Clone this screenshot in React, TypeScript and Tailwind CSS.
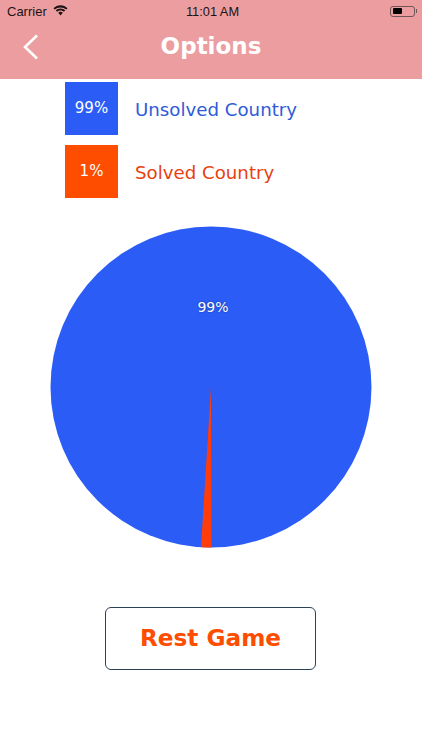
const dejavu = "font-['DejaVu_Sans',sans-serif]";

function WifiIcon() {
    return (
        <svg width="15" height="11" viewBox="0 0 15 11" fill="#1c1416" className="-mt-[3px]">
            <path d="M7.5 2.4c2.2 0 4.2.9 5.7 2.2l1.3-1.4C12.6 1.4 10.2.3 7.5.3S2.4 1.4.5 3.2l1.3 1.4c1.5-1.3 3.5-2.2 5.7-2.2z" />
            <path d="M7.5 5.5c1.3 0 2.5.5 3.4 1.3l1.3-1.4C10.9 4.3 9.3 3.6 7.5 3.6s-3.4.7-4.7 1.8l1.3 1.4c.9-.8 2.1-1.3 3.4-1.3z" />
            <path d="M7.5 6.8c-.9 0-1.7.3-2.3.9l2.3 2.9 2.3-2.9c-.6-.6-1.4-.9-2.3-.9z" />
        </svg>
    );
}

function BatteryIcon() {
    return (
        <div className="-mt-[1px] flex items-center">
            <div className="flex h-[11px] w-[25px] items-center rounded-[3px] border border-[#6f5557] p-[1.5px]">
                <div className="h-full w-[9px] rounded-[1px] bg-black" />
            </div>
            <div className="ml-[1px] h-[4px] w-[1px] bg-[#6f5557]" />
        </div>
    );
}

function BackIcon() {
    return (
        <svg className="absolute left-[22px] top-[12px]" width="17" height="26" viewBox="0 0 17 26" fill="none" stroke="white" strokeWidth="2.6">
            <path d="M15 1.5 L3 13 L15 24.5" />
        </svg>
    );
}

function LegendRow({ color, textColor, value, label }: { color: string; textColor: string; value: string; label: string }) {
    return (
        <div className="flex items-center">
            <div className={`flex h-[53px] w-[53px] items-center justify-center text-[15px] text-white ${color}`}>{value}</div>
            <span className={`ml-[17px] mt-[3px] text-[18.2px] ${textColor}`}>{label}</span>
        </div>
    );
}

export default function App() {
    return (
        <div className={`flex h-[750px] w-[422px] flex-col overflow-hidden bg-white ${dejavu}`}>
            <header className="h-[79px] shrink-0 bg-[#ec9d9f]">
                <div className="flex h-[22px] items-center justify-between pl-[7px] pr-[5px] pt-[1px] font-['Liberation_Sans',sans-serif] text-[13px] text-[#1c1416]">
                    <div className="flex w-[120px] items-center gap-[6px]">
                        <span>Carrier</span>
                        <WifiIcon />
                    </div>
                    <span className="ml-[1px] text-[12.8px] font-medium">11:01 AM</span>
                    <div className="flex w-[120px] justify-end">
                        <BatteryIcon />
                    </div>
                </div>
                <div className="relative flex h-[57px] items-center justify-center pb-[8px]">
                    <BackIcon />
                    <h1 className="text-[23px] font-bold text-white">Options</h1>
                </div>
            </header>

            <div className="ml-[65px] mt-[3px] flex flex-col gap-[10px]">
                <LegendRow color="bg-[#2b5cf6]" textColor="text-[#2f5bd8]" value="99%" label="Unsolved Country" />
                <LegendRow color="bg-[#ff4d00]" textColor="text-[#e8410f]" value="1%" label="Solved Country" />
            </div>

            <div className="relative ml-[50px] mt-[28px] h-[322px] w-[322px]">
                <svg width="322" height="322" viewBox="0 0 322 322">
                    <circle cx="161" cy="161" r="160.5" fill="#2b5cf6" />
                    <path d="M161 161 L161.5 321.5 A160.5 160.5 0 0 1 151 321.2 Z" fill="#ff3d0a" />
                </svg>
                <span className="absolute left-[4px] right-0 top-[71px] text-center text-[14px] text-white [text-shadow:0_0_2px_rgba(0,0,0,0.45)]">99%</span>
            </div>

            <button className="ml-[105px] mt-[59px] flex h-[63px] w-[211px] items-center justify-center rounded-[6px] border border-[#2c4257] bg-white text-[23.2px] font-bold text-[#ff4d00]">
                Rest Game
            </button>
        </div>
    );
}
